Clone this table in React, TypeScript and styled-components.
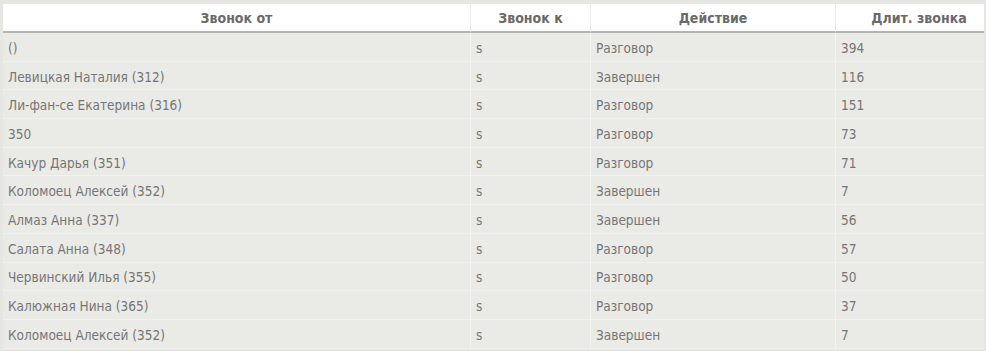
import React from "react";
import styled, { createGlobalStyle } from "styled-components";

const Global = createGlobalStyle`
  html, body { margin: 0; padding: 0; background: #e6e6e2; }
  body { font-family: "DejaVu Sans Condensed", "DejaVu Sans", "Open Sans", sans-serif; }
`;

const Page = styled.div`
  padding: 4px 2px 0 3px;
  width: 986px;
  box-sizing: border-box;
`;

const Grid = styled.div`
  display: grid;
  grid-template-columns: 467px 120px 245px 149px;
  background: #eaeae7;
`;

const HeadCell = styled.div<{ $shift?: number }>`
  height: 29px;
  box-sizing: border-box;
  background: #ffffff;
  border-bottom: 2px solid #b4b4b0;
  border-left: 1px solid #ececea;
  display: flex;
  align-items: center;
  justify-content: center;
  padding-left: ${(p) => p.$shift ?? 0}px;
  font-weight: 700;
  font-size: 14px;
  color: #6a6a6a;
  &:first-child { border-left: none; }
`;

const Cell = styled.div<{ $first?: boolean }>`
  height: 28.7px;
  box-sizing: border-box;
  border-bottom: 1px solid #f1f1ef;
  border-left: ${(p) => (p.$first ? "none" : "1px solid #f3f3f1")};
  display: flex;
  align-items: center;
  padding: 2px 0 0 5px;
  font-size: 13.5px;
  color: #767676;
  white-space: nowrap;
`;

const rows: [string, string, string, string][] = [
  ["()", "s", "Разговор", "394"],
  ["Левицкая Наталия (312)", "s", "Завершен", "116"],
  ["Ли-фан-се Екатерина (316)", "s", "Разговор", "151"],
  ["350", "s", "Разговор", "73"],
  ["Качур Дарья (351)", "s", "Разговор", "71"],
  ["Коломоец Алексей (352)", "s", "Завершен", "7"],
  ["Алмаз Анна (337)", "s", "Завершен", "56"],
  ["Салата Анна (348)", "s", "Разговор", "57"],
  ["Червинский Илья (355)", "s", "Разговор", "50"],
  ["Калюжная Нина (365)", "s", "Разговор", "37"],
  ["Коломоец Алексей (352)", "s", "Завершен", "7"],
];

export default function App() {
  return (
    <Page>
      <Global />
      <Grid>
        <HeadCell>Звонок от</HeadCell>
        <HeadCell>Звонок к</HeadCell>
        <HeadCell>Действие</HeadCell>
        <HeadCell $shift={18}>Длит. звонка</HeadCell>
        {rows.map((r, i) =>
          r.map((c, j) => (
            <Cell key={`${i}-${j}`} $first={j === 0}>
              {c}
            </Cell>
          ))
        )}
      </Grid>
    </Page>
  );
}
